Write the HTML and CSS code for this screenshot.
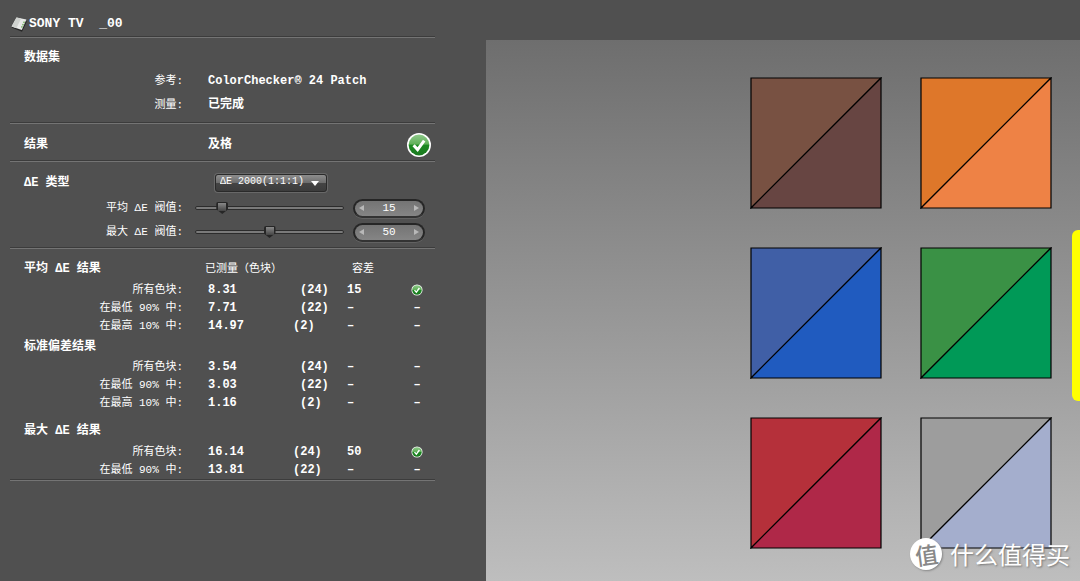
FILE: index.html
```html
<!DOCTYPE html>
<html lang="zh-CN">
<head>
<meta charset="utf-8">
<title>SONY TV _00</title>
<link rel="stylesheet" href="styles.css">
</head>
<body>
<svg class="defs" aria-hidden="true">
  <defs>
    <linearGradient id="ok" x1="0" y1="0" x2="0" y2="1">
      <stop offset="0" stop-color="#8fc98b"/>
      <stop offset="0.46" stop-color="#5fb058"/>
      <stop offset="0.5" stop-color="#1c8a22"/>
      <stop offset="1" stop-color="#1b7a20"/>
    </linearGradient>
    <symbol id="pass" viewBox="0 0 26 26">
      <circle cx="13" cy="13.6" r="12" fill="#3a3a3a" opacity="0.6"/>
      <circle cx="13" cy="13" r="12" fill="#fff"/>
      <circle cx="13" cy="13" r="10.4" fill="url(#ok)"/>
      <path d="M7.6 13.2l4 4.4 6.6-9" fill="none" stroke="#fff" stroke-width="3"/>
    </symbol>
  </defs>
</svg>
<div class="app">
  <aside class="panel">
    <header class="section title">
      <svg class="doc" viewBox="0 0 16 15" aria-hidden="true">
        <path d="M0.5 10.5L11 14.8 15.8 4.5 14 3z" fill="#262626"/>
        <path d="M5.5 0.6L15.4 2.6 10.8 13 0.6 9.6z" fill="#e8eae8"/>
        <path d="M5.5 0.6l4.6 1L5.4 11.2 0.6 9.6z" fill="#cfd2cf"/>
        <path d="M13.4 4.6l-2.8 6" stroke="#72b05c" stroke-width="1.4" stroke-dasharray="1.6 1"/>
      </svg>
      <h1>SONY TV&nbsp; _00</h1>
    </header>

    <section class="section dataset">
      <h2>数据集</h2>
      <dl>
        <dt>参考:</dt><dd>ColorChecker® 24 Patch</dd>
        <dt>测量:</dt><dd>已完成</dd>
      </dl>
    </section>

    <section class="section outcome">
      <h2>结果</h2>
      <strong>及格</strong>
      <svg class="badge" role="img" aria-label="及格"><use href="#pass"/></svg>
    </section>

    <section class="section settings">
      <div class="kind">
        <label for="kind">ΔE 类型</label>
        <span class="drop">
          <select id="kind"><option>ΔE 2000(1:1:1)</option></select>
        </span>
      </div>
      <div class="limit">
        <label for="avg">平均 ΔE 阀值:</label>
        <input id="avg" type="range" min="0" max="100" value="15">
        <span class="spin">
          <button type="button" aria-label="减少"><i class="left"></i></button>
          <input type="text" aria-label="平均 ΔE 阀值" value="15">
          <button type="button" aria-label="增加"><i class="right"></i></button>
        </span>
      </div>
      <div class="limit">
        <label for="max">最大 ΔE 阀值:</label>
        <input id="max" type="range" min="0" max="100" value="50">
        <span class="spin">
          <button type="button" aria-label="减少"><i class="left"></i></button>
          <input type="text" aria-label="最大 ΔE 阀值" value="50">
          <button type="button" aria-label="增加"><i class="right"></i></button>
        </span>
      </div>
    </section>

    <section class="section results">
      <table>
        <colgroup><col class="c-name"><col class="c-value"><col class="c-count"><col class="c-limit"><col class="c-state"></colgroup>
        <tbody>
          <tr class="first"><th class="group">平均 ΔE 结果</th><th class="head" colspan="2">已测量（色块）</th><th class="head limit-head">容差</th><th></th></tr>
          <tr><th>所有色块:</th><td class="value">8.31</td><td class="far">(24)</td><td>15</td><td class="state"><svg class="mini" role="img" aria-label="及格"><use href="#pass"/></svg></td></tr>
          <tr><th>在最低 90% 中:</th><td class="value">7.71</td><td class="far">(22)</td><td>–</td><td class="state">–</td></tr>
          <tr><th>在最高 10% 中:</th><td class="value">14.97</td><td>(2)</td><td>–</td><td class="state">–</td></tr>
        </tbody>
        <tbody>
          <tr class="second"><th class="group" colspan="5">标准偏差结果</th></tr>
          <tr><th>所有色块:</th><td class="value">3.54</td><td class="far">(24)</td><td>–</td><td class="state">–</td></tr>
          <tr><th>在最低 90% 中:</th><td class="value">3.03</td><td class="far">(22)</td><td>–</td><td class="state">–</td></tr>
          <tr><th>在最高 10% 中:</th><td class="value">1.16</td><td class="far">(2)</td><td>–</td><td class="state">–</td></tr>
        </tbody>
        <tbody>
          <tr class="third"><th class="group" colspan="5">最大 ΔE 结果</th></tr>
          <tr><th>所有色块:</th><td class="value">16.14</td><td>(24)</td><td>50</td><td class="state"><svg class="mini" role="img" aria-label="及格"><use href="#pass"/></svg></td></tr>
          <tr><th>在最低 90% 中:</th><td class="value">13.81</td><td>(22)</td><td>–</td><td class="state">–</td></tr>
        </tbody>
      </table>
    </section>
  </aside>

  <main class="chart">
    <div class="patches">
      <svg class="patch brown" viewBox="0 0 132 132"><path class="a" d="M1 1h130L1 131z"/><path class="b" d="M131 1v130H1z"/></svg>
      <svg class="patch orange" viewBox="0 0 132 132"><path class="a" d="M1 1h130L1 131z"/><path class="b" d="M131 1v130H1z"/></svg>
      <svg class="patch blue" viewBox="0 0 132 132"><path class="a" d="M1 1h130L1 131z"/><path class="b" d="M131 1v130H1z"/></svg>
      <svg class="patch green" viewBox="0 0 132 132"><path class="a" d="M1 1h130L1 131z"/><path class="b" d="M131 1v130H1z"/></svg>
      <svg class="patch red" viewBox="0 0 132 132"><path class="a" d="M1 1h130L1 131z"/><path class="b" d="M131 1v130H1z"/></svg>
      <svg class="patch gray" viewBox="0 0 132 132"><path class="a" d="M1 1h130L1 131z"/><path class="b" d="M131 1v130H1z"/></svg>
    </div>
    <div class="next-patch"></div>
    <div class="watermark"><span class="seal"><b>值</b></span><span>什么值得买</span></div>
  </main>
</div>
</body>
</html>
```
FILE: styles.css
```css
* { box-sizing: border-box; }

body {
  margin: 0;
  background: #505050;
  color: #fff;
  font: 11px/18px "Liberation Mono", "Noto Sans CJK SC", monospace;
}

h1, h2, dl, dd { margin: 0; }
h2 { font-size: 12px; line-height: 18px; }
.defs { position: absolute; width: 0; height: 0; }

.app { display: flex; min-height: 100vh; }

.panel {
  flex: none;
  width: 45%;
  min-width: 486px;
  padding: 0 51px 0 10px;
}

.section {
  border-bottom: 1px solid #747474;
  box-shadow: inset 0 -1px #3c3c3c;
}

.title { display: flex; align-items: center; gap: 2px; padding: 15px 0 4px 1px; }
.title h1 { font-size: 13px; line-height: 18px; }
.doc { width: 16px; height: 15px; }

.dataset { padding: 11px 0 6px 14px; }
.dataset dl { display: grid; grid-template-columns: 159px 1fr; column-gap: 25px; line-height: 24px; margin-top: 2px; }
.dataset dt { text-align: right; }
.dataset dd { font-size: 12px; font-weight: bold; }

.outcome {
  display: grid;
  grid-template-columns: 184px 1fr 26px;
  align-items: center;
  padding: 8px 3px 3px 14px;
  font-size: 12px;
}
.badge { width: 26px; height: 26px; }

.settings { padding: 7px 0 4px; }
.kind { display: grid; grid-template-columns: 191px 112px; align-items: center; padding-left: 14px; height: 27px; font-size: 12px; font-weight: bold; }
.drop { position: relative; display: flex; }
.drop::after {
  content: "";
  position: absolute;
  right: 8px;
  top: 7px;
  border: 4px solid transparent;
  border-top: 5px solid #fff;
  border-bottom: 0;
  pointer-events: none;
}
.drop select {
  width: 100%;
  height: 18px;
  padding: 0 16px 2px 4px;
  border: 1px solid #2a2a2a;
  border-radius: 3px;
  appearance: none;
  background: linear-gradient(#8d8d8d, #6c6c6c 50%, #444 52%, #3c3c3c);
  box-shadow: 0 0 0 1px #686868;
  color: #fff;
  font: 10px/14px "Liberation Mono", monospace;
}

.limit { display: grid; grid-template-columns: 173px 149px 72px; align-items: center; height: 24px; }
.limit label { text-align: right; }
.limit input[type="range"] {
  width: 149px;
  height: 16px;
  margin: 0 0 0 12px;
  appearance: none;
  background: transparent;
}
.limit input[type="range"]::-webkit-slider-runnable-track {
  height: 4px;
  border: 1px solid #2c2c2c;
  border-radius: 2px;
  background: #7a7a7a;
}
.limit input[type="range"]::-webkit-slider-thumb {
  appearance: none;
  width: 12px;
  height: 12px;
  margin-top: -5px;
  background: linear-gradient(#888, #444) 50% 1px / 8px 8px no-repeat #262626;
  border-radius: 2px;
  clip-path: polygon(0 0, 100% 0, 100% 60%, 50% 100%, 0 60%);
}

.spin {
  display: flex;
  align-items: center;
  width: 72px;
  height: 19px;
  margin-left: 21px;
  border: 2px solid #262626;
  border-bottom-color: #333;
  border-radius: 10px;
  background: linear-gradient(#747474, #858585);
  box-shadow: 0 1px #626262;
}
.spin input {
  flex: 1;
  min-width: 0;
  padding: 0;
  border: 0;
  background: none;
  color: #fff;
  font: 11px/14px "Liberation Mono", monospace;
  text-align: center;
}
.spin button { display: flex; padding: 0 4px; border: 0; background: none; }
.left, .right { border: 3px solid transparent; }
.left { border-right: 5px solid #b8b8b8; border-left: 0; }
.right { border-left: 5px solid #b8b8b8; border-right: 0; }

.results { padding: 8px 0 1px; }
table { width: 100%; border-collapse: collapse; table-layout: fixed; }
.c-name { width: 173px; }
.c-value { width: 110px; }
.c-count { width: 54px; }
.c-limit { width: 52px; }
tr { height: 18px; }
th, td { padding: 0; line-height: 18px; white-space: nowrap; }
th { font-weight: normal; text-align: right; }
td { font-size: 12px; font-weight: bold; }
.group { padding-left: 14px; font-size: 12px; font-weight: bold; text-align: left; }
.head { padding-left: 22px; text-align: left; }
.limit-head { padding-left: 5px; }
.value { padding-left: 25px; }
.first { height: 24px; }
.second { height: 23px; }
.third { height: 31px; }
.third th { padding-top: 7px; }
.far { padding-left: 7px; }
.state { text-align: center; }
.mini { display: block; width: 12px; height: 12px; margin: 0 auto; }

.chart {
  position: relative;
  flex: 1;
  margin-top: 40px;
  background: linear-gradient(#6e6e6e, #bebebe);
  overflow: hidden;
}
.patches {
  display: grid;
  grid-template-columns: 132px 132px;
  gap: 38px;
  justify-content: end;
  padding: 37px 28px 32px;
}
.patch { display: block; width: 132px; height: 132px; stroke: #000; stroke-width: 1.2; }
.brown .a { fill: #785142; } .brown .b { fill: #674542; }
.orange .a { fill: #de772a; } .orange .b { fill: #ee8245; }
.blue .a { fill: #405fa6; } .blue .b { fill: #205bbf; }
.green .a { fill: #3a9145; } .green .b { fill: #009957; }
.red .a { fill: #b5303a; } .red .b { fill: #af2848; }
.gray .a { fill: #9d9d9d; } .gray .b { fill: #a4aecd; }

.next-patch {
  position: absolute;
  top: 190px;
  right: 0;
  width: 8px;
  height: 171px;
  border-radius: 6px 0 0 6px;
  background: #ff0;
}

.watermark {
  position: absolute;
  right: 10px;
  bottom: 11px;
  display: flex;
  align-items: center;
  gap: 8px;
  font: 24px/32px "Noto Sans CJK SC", sans-serif;
  text-shadow: 1px 1px 2px #777;
}
.seal {
  display: grid;
  place-items: center;
  width: 32px;
  height: 32px;
  border-radius: 50%;
  background: #fff;
  box-shadow: 1px 1px 2px #888;
  color: #888;
  font-size: 23px;
  line-height: 28px;
  text-shadow: none;
}
.seal b { font-weight: 500; transform: rotate(-8deg); }
```
